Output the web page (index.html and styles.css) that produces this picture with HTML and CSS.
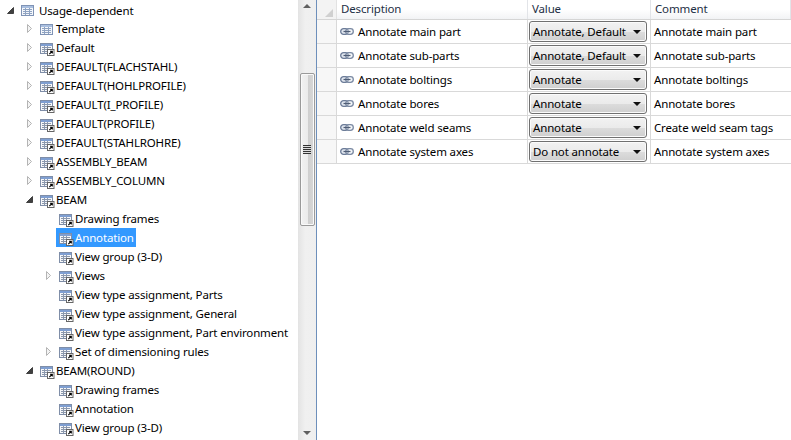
FILE: index.html
```html
<!DOCTYPE html>
<html lang="en">
<head>
<meta charset="utf-8">
<title>Usage-dependent</title>
<link rel="stylesheet" href="styles.css">
</head>
<body>
<svg class="defs" width="0" height="0">
  <symbol id="tbl" viewBox="0 0 16 16">
    <rect x=".5" y="3.5" width="12" height="10" fill="#f4f7fb" stroke="#7f93b5"/>
    <rect x="1" y="4" width="11" height="2" fill="#a9bfe0"/>
    <path d="M2 7.5h9M2 9.5h9M2 11.5h9M4.5 6v7M8.5 6v7" stroke="#8fa3c2" fill="none"/>
  </symbol>
  <symbol id="lnk" viewBox="0 0 16 16">
    <rect x=".5" y="3.5" width="12" height="10" fill="#f6f7f9" stroke="#7f8ea8"/>
    <rect x="1" y="4" width="11" height="2" fill="#7f9fd2"/>
    <path d="M2 7.5h9M2 9.5h9M2 11.5h9M4.5 6v7M7.5 6v7" stroke="#8b98ad" fill="none"/>
    <rect x="7.5" y="9.5" width="6.5" height="6" fill="#fff" stroke="#666"/>
    <path d="M9.3 14.2l2.7-2.7M10 11.2h2.3v2.3" stroke="#000" stroke-width="1.1" fill="none"/>
  </symbol>
  <symbol id="closed" viewBox="0 0 9 9">
    <path d="M2.5 .5l4 4-4 4z" fill="#f4f4f4" stroke="#b4b4b4"/>
  </symbol>
  <symbol id="open" viewBox="0 0 9 9">
    <path d="M7.5 1.5v6h-6z" fill="#404040" stroke="#404040"/>
  </symbol>
  <symbol id="chain" viewBox="0 0 14 7">
    <rect x=".7" y=".7" width="7.6" height="5.6" rx="2.8" fill="#dfe5ee" stroke="#6c7c98" stroke-width="1.3"/>
    <rect x="5.7" y=".7" width="7.6" height="5.6" rx="2.8" fill="#dfe5ee" fill-opacity=".4" stroke="#7b8aa3" stroke-width="1.3"/>
    <path d="M3.5 3.5h7" stroke="#4f5d75" stroke-width="1.2"/>
  </symbol>
</svg>

<div class="window">
  <nav class="tree">
    <div class="row"><svg class="arrow"><use href="#open"/></svg><svg class="ico root-ico"><use href="#tbl"/></svg><span>Usage-dependent</span></div>
    <div class="row l1"><svg class="arrow"><use href="#closed"/></svg><svg class="ico"><use href="#tbl"/></svg><span>Template</span></div>
    <div class="row l1"><svg class="arrow"><use href="#closed"/></svg><svg class="ico"><use href="#lnk"/></svg><span>Default</span></div>
    <div class="row l1"><svg class="arrow"><use href="#closed"/></svg><svg class="ico"><use href="#lnk"/></svg><span>DEFAULT(FLACHSTAHL)</span></div>
    <div class="row l1"><svg class="arrow"><use href="#closed"/></svg><svg class="ico"><use href="#lnk"/></svg><span>DEFAULT(HOHLPROFILE)</span></div>
    <div class="row l1"><svg class="arrow"><use href="#closed"/></svg><svg class="ico"><use href="#lnk"/></svg><span>DEFAULT(I_PROFILE)</span></div>
    <div class="row l1"><svg class="arrow"><use href="#closed"/></svg><svg class="ico"><use href="#lnk"/></svg><span>DEFAULT(PROFILE)</span></div>
    <div class="row l1"><svg class="arrow"><use href="#closed"/></svg><svg class="ico"><use href="#lnk"/></svg><span>DEFAULT(STAHLROHRE)</span></div>
    <div class="row l1"><svg class="arrow"><use href="#closed"/></svg><svg class="ico"><use href="#lnk"/></svg><span>ASSEMBLY_BEAM</span></div>
    <div class="row l1"><svg class="arrow"><use href="#closed"/></svg><svg class="ico"><use href="#lnk"/></svg><span>ASSEMBLY_COLUMN</span></div>
    <div class="row l1"><svg class="arrow"><use href="#open"/></svg><svg class="ico"><use href="#lnk"/></svg><span>BEAM</span></div>
    <div class="row l2"><i class="arrow"></i><svg class="ico"><use href="#lnk"/></svg><span>Drawing frames</span></div>
    <div class="row l2 selected"><i class="arrow"></i><div class="sel"><svg class="ico"><use href="#lnk"/></svg><span>Annotation</span></div></div>
    <div class="row l2"><i class="arrow"></i><svg class="ico"><use href="#lnk"/></svg><span>View group (3-D)</span></div>
    <div class="row l2"><svg class="arrow"><use href="#closed"/></svg><svg class="ico"><use href="#lnk"/></svg><span>Views</span></div>
    <div class="row l2"><i class="arrow"></i><svg class="ico"><use href="#lnk"/></svg><span>View type assignment, Parts</span></div>
    <div class="row l2"><i class="arrow"></i><svg class="ico"><use href="#lnk"/></svg><span>View type assignment, General</span></div>
    <div class="row l2"><i class="arrow"></i><svg class="ico"><use href="#lnk"/></svg><span>View type assignment, Part environment</span></div>
    <div class="row l2"><svg class="arrow"><use href="#closed"/></svg><svg class="ico"><use href="#lnk"/></svg><span>Set of dimensioning rules</span></div>
    <div class="row l1"><svg class="arrow"><use href="#open"/></svg><svg class="ico"><use href="#lnk"/></svg><span>BEAM(ROUND)</span></div>
    <div class="row l2"><i class="arrow"></i><svg class="ico"><use href="#lnk"/></svg><span>Drawing frames</span></div>
    <div class="row l2"><i class="arrow"></i><svg class="ico"><use href="#lnk"/></svg><span>Annotation</span></div>
    <div class="row l2"><i class="arrow"></i><svg class="ico"><use href="#lnk"/></svg><span>View group (3-D)</span></div>
  </nav>

  <div class="scrollbar">
    <div class="sb-arrow up"></div>
    <div class="sb-thumb"><div class="grip"></div></div>
    <div class="sb-arrow down"></div>
  </div>

  <main class="grid">
    <div class="head">
      <div class="corner"></div>
      <div class="hc desc">Description</div>
      <div class="hc val">Value</div>
      <div class="hc com">Comment</div>
    </div>
    <div class="gr"><div class="rh"></div><div class="c desc"><svg class="chain"><use href="#chain"/></svg>Annotate main part</div><div class="c val"><div class="combo"><span>Annotate, Default</span><b></b></div></div><div class="c com">Annotate main part</div></div>
    <div class="gr"><div class="rh"></div><div class="c desc"><svg class="chain"><use href="#chain"/></svg>Annotate sub-parts</div><div class="c val"><div class="combo"><span>Annotate, Default</span><b></b></div></div><div class="c com">Annotate sub-parts</div></div>
    <div class="gr"><div class="rh"></div><div class="c desc"><svg class="chain"><use href="#chain"/></svg>Annotate boltings</div><div class="c val"><div class="combo"><span>Annotate</span><b></b></div></div><div class="c com">Annotate boltings</div></div>
    <div class="gr"><div class="rh"></div><div class="c desc"><svg class="chain"><use href="#chain"/></svg>Annotate bores</div><div class="c val"><div class="combo"><span>Annotate</span><b></b></div></div><div class="c com">Annotate bores</div></div>
    <div class="gr"><div class="rh"></div><div class="c desc"><svg class="chain"><use href="#chain"/></svg>Annotate weld seams</div><div class="c val"><div class="combo"><span>Annotate</span><b></b></div></div><div class="c com">Create weld seam tags</div></div>
    <div class="gr"><div class="rh"></div><div class="c desc"><svg class="chain"><use href="#chain"/></svg>Annotate system axes</div><div class="c val"><div class="combo"><span>Do not annotate</span><b></b></div></div><div class="c com">Annotate system axes</div></div>
  </main>
</div>
</body>
</html>
```

FILE: styles.css
```css
* { box-sizing: border-box; }
html, body { margin: 0; height: 100%; overflow: hidden; background: #fff; }
body { font: 11.5px/19px "Noto Sans", "Open Sans", sans-serif; letter-spacing: -0.15px; color: #000; }
.defs { display: block; height: 0; }
.window { display: flex; height: 440px; width: 791px; }

.tree { width: 298px; flex: none; overflow: hidden; padding-top: 1px; }
.row { display: flex; align-items: center; height: 19px; padding-left: 6px; white-space: nowrap; }
.row:first-child { height: 18px; }
.l1 { padding-left: 25px; }
.l2 { padding-left: 44px; }
.arrow { display: block; width: 9px; height: 9px; flex: none; margin-right: 6px; }
.ico { display: block; width: 16px; height: 16px; flex: none; }
.root-ico { margin-right: 2px; }
.sel { display: flex; align-items: center; height: 19px; margin-left: -3px; padding-left: 3px; width: 80px; background: #3399ff; color: #fff; }

.scrollbar { width: 18px; flex: none; display: flex; flex-direction: column; align-items: center; background: linear-gradient(90deg, #e3e3e3, #f0f0f0 40%, #efefef); }
.sb-arrow { height: 17px; flex: none; width: 100%; position: relative; }
.sb-arrow::after { content: ""; position: absolute; left: 5px; border: 4px solid transparent; }
.up::after { top: 0; border-bottom-color: #606060; }
.down::after { top: 8px; border-top-color: #606060; }
.sb-thumb { margin-top: 56px; height: 153px; width: 15px; flex: none; border: 1px solid #9a9a9a; border-radius: 2px; background: linear-gradient(90deg, #f2f2f2, #ececec 50%, #cfcfcf 55%, #d8d8d8); display: flex; align-items: center; justify-content: center; box-shadow: inset 0 0 0 1px #fafafa; }
.grip { width: 8px; height: 9px; background: repeating-linear-gradient(#333 0 1px, #ddd 1px 2px); }
.down { margin-top: auto; }

.grid { flex: 1; min-width: 0; border-left: 1px solid #6d8fbb; }
.head { display: grid; grid-template-columns: 20px 191px 123px 1fr; height: 20px; background: linear-gradient(#fff, #fff 50%, #f2f3f5); border-bottom: 1px solid #d5d5d5; }
.corner { background: #f3f3f3; position: relative; border-right: 1px solid #e2e2e2; }
.corner::after { content: ""; position: absolute; right: 3px; bottom: 2px; border: 4.5px solid transparent; border-right-color: #d0d0d0; border-bottom-color: #d0d0d0; }
.hc { padding-left: 4px; line-height: 18px; border-right: 1px solid #e2e4e8; color: #1e2f45; }
.gr { display: grid; grid-template-columns: 20px 191px 123px 1fr; height: 24px; border-bottom: 1px solid #d9d9d9; }
.rh { background: #f7f7f7; border-right: 1px solid #d9d9d9; }
.c { display: flex; align-items: center; border-right: 1px solid #d9d9d9; padding-left: 3px; white-space: nowrap; }
.c.com { border-right: 0; }
.chain { width: 14px; height: 7px; margin-right: 4px; flex: none; }
.c.val { padding-left: 1px; }
.combo { display: flex; align-items: center; justify-content: space-between; width: 118px; height: 21px; border: 1px solid #707070; border-radius: 3px; background: linear-gradient(#f2f2f2, #ebebeb 50%, #dcdcdc 52%, #cfcfcf); padding: 0 5px 0 3px; box-shadow: inset 0 0 0 1px #fbfbfb; }
.combo b { width: 0; height: 0; border: 4px solid transparent; border-top-color: #111; border-bottom: 0; }
```
